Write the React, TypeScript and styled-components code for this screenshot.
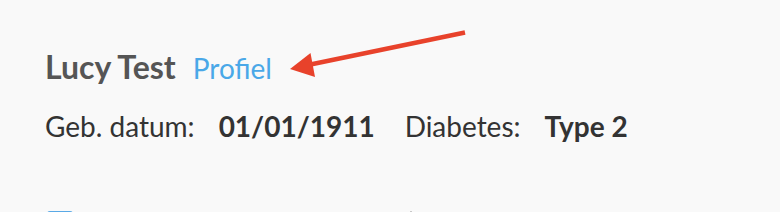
import React from "react";
import styled, { createGlobalStyle } from "styled-components";

const Global = createGlobalStyle`
  html, body { margin: 0; padding: 0; background: #f9f9f9; }
  body { font-family: Lato, "Open Sans", sans-serif; overflow: hidden; }
`;

const Page = styled.div`
  position: relative;
  width: 780px;
  height: 212px;
  overflow: hidden;
  background: #f9f9f9;
  padding: 48px 0 0 45px;
  box-sizing: border-box;
`;

const Header = styled.div`
  display: flex;
  align-items: baseline;
  gap: 17px;
`;

const Name = styled.h1`
  margin: 0;
  font-size: 32px;
  font-weight: 700;
  color: #555555;
  line-height: 38px;
`;

const ProfileLink = styled.a`
  font-size: 28px;
  color: #4aa8e8;
  text-decoration: none;
  line-height: 38px;
`;

const InfoRow = styled.div`
  display: flex;
  align-items: baseline;
  margin-top: 22px;
  font-size: 28px;
  line-height: 34px;
  color: #333333;
`;

const Label = styled.span`
  font-weight: 400;
  margin-right: 24px;
`;

const Value = styled.span`
  font-weight: 700;
  margin-right: 30px;
`;

const BottomRow = styled.div`
  display: flex;
  align-items: flex-start;
  margin-top: 68px;
`;

const Check = styled.div`
  margin-left: 2px;
  width: 26px;
  height: 26px;
  border: 2px solid #5aa9e6;
  border-radius: 3px;
  box-sizing: border-box;
`;

const Dot = styled.div`
  margin-left: 337px;
  width: 2px;
  height: 2px;
  background: #c8c8c8;
`;

const ArrowSvg = styled.svg`
  position: absolute;
  left: 280px;
  top: 20px;
`;

export default function App() {
  return (
    <>
      <Global />
      <Page>
        <Header>
          <Name>Lucy Test</Name>
          <ProfileLink href="#">Profiel</ProfileLink>
        </Header>
        <InfoRow>
          <Label>Geb. datum:</Label>
          <Value>01/01/1911</Value>
          <Label>Diabetes:</Label>
          <Value>Type 2</Value>
        </InfoRow>
        <BottomRow>
          <Check />
          <Dot />
        </BottomRow>
        <ArrowSvg width="200" height="70" viewBox="0 0 200 70">
          <line x1="185" y1="12.5" x2="28" y2="45" stroke="#e8422b" strokeWidth="4.5" />
          <polygon points="10,49 30.5,33 35,57" fill="#e8422b" />
        </ArrowSvg>
      </Page>
    </>
  );
}
